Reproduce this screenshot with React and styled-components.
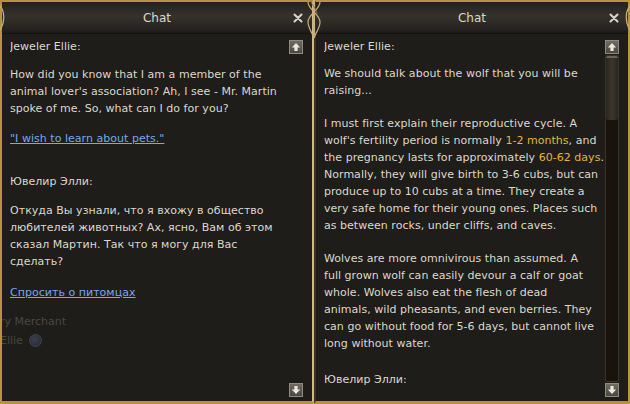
import React from 'react';
import styled, { createGlobalStyle } from 'styled-components';

const Global = createGlobalStyle`
  html, body {
    margin: 0;
    padding: 0;
    background: #1b1916;
  }
  body {
    width: 630px;
    height: 404px;
    overflow: hidden;
  }
`;

const gold = '#b8923f';

const Stage = styled.div`
  position: relative;
  display: flex;
  width: 630px;
  height: 404px;
  overflow: hidden;
  background: #1b1916;
  font-family: "DejaVu Sans", Verdana, sans-serif;
`;

const Window = styled.section`
  position: relative;
  display: flex;
  flex-direction: column;
  box-sizing: border-box;
  width: ${p => p.$w}px;
  height: 404px;
  border-top: 2px solid ${gold};
  border-bottom: 3px solid ${gold};
  border-left: 2px solid ${p => p.$leftEdge};
  border-right: 2px solid ${p => p.$rightEdge};
  background: #1f1d1a;
  overflow: hidden;
`;

const Header = styled.header`
  position: relative;
  flex: 0 0 31px;
  display: flex;
  align-items: center;
  justify-content: center;
  background: linear-gradient(#23211d 0%, #2b2924 20%, #35322c 45%, #2d2a25 70%, #242220 90%, #1c1a17 100%);
  border-bottom: 1px solid #15130f;
`;

const Title = styled.h1`
  margin: 0;
  font-size: 12px;
  font-weight: normal;
  color: #dcd8cc;
`;

const Close = styled.button`
  position: absolute;
  right: ${p => p.$right}px;
  top: 10px;
  width: 11px;
  height: 11px;
  padding: 0;
  border: 0;
  background: none;
  display: flex;
  align-items: center;
  justify-content: center;
`;

const Ornament = styled.svg`
  position: absolute;
  top: -2px;
  left: 50%;
  transform: translateX(-50%);
  pointer-events: none;
`;

const Body = styled.div`
  position: relative;
  flex: 1;
  display: flex;
  min-height: 0;
  padding: 4px 9px 4px 8px;
  background: #1f1d1a;
`;

const Content = styled.div`
  position: relative;
  z-index: 1;
  flex: 1;
  min-width: 0;
  overflow: hidden;
  font-size: 11px;
  letter-spacing: 0.03px;
  line-height: 17px;
  color: #dcd8cc;
`;

const Speaker = styled.div`
  margin-bottom: ${p => p.$gap}px;
`;

const Para = styled.p`
  margin: 0 0 ${p => p.$gap}px;
`;

const Hi = styled.span`
  color: #eab23a;
`;

const Link = styled.a`
  display: inline-block;
  margin-bottom: ${p => p.$gap}px;
  color: #7aa6ec;
  text-decoration: underline;
  cursor: pointer;
`;

const ScrollCol = styled.div`
  position: relative;
  z-index: 2;
  flex: 0 0 14px;
  display: flex;
  flex-direction: column;
  margin-left: ${p => p.$ml}px;
  padding-top: 2px;
`;

const ScrollBtn = styled.button`
  flex: 0 0 14px;
  width: 14px;
  height: 14px;
  padding: 0;
  box-sizing: border-box;
  border: 1px solid #8e8a7e;
  background: linear-gradient(#6f6b61, #4b4841);
  display: flex;
  align-items: center;
  justify-content: center;
`;

const Track = styled.div`
  flex: 1;
  margin: 1px 0 1px;
  display: flex;
  flex-direction: column;
  box-sizing: border-box;
  border: 1px solid #3a3127;
  border-radius: 2px;
  background: #1a120d;
  visibility: ${p => (p.$show ? 'visible' : 'hidden')};
`;

const Thumb = styled.div`
  height: 64px;
  box-sizing: border-box;
  border-radius: 2px;
  border-top: 2px solid #6b655a;
  background: linear-gradient(90deg, #2c2620, #3c352d 50%, #2c2620);
`;

const Backdrop = styled.div`
  position: absolute;
  left: ${p => p.$x}px;
  top: ${p => p.$y}px;
  z-index: 0;
  font-size: 11px;
  color: #4a4740;
  display: flex;
  align-items: center;
  gap: 6px;
  white-space: nowrap;
`;

const Dot = styled.span`
  width: 11px;
  height: 11px;
  border-radius: 50%;
  border: 1px solid #3f4450;
  background: radial-gradient(circle at 40% 40%, #3a4150, #22262e);
`;

const Twist = styled.svg`
  position: absolute;
  top: 0;
  left: ${p => p.$x}px;
  z-index: 3;
  pointer-events: none;
`;

const Arrow = ({ down }) => (
  <svg width="10" height="10" viewBox="0 0 10 10" style={down ? { transform: 'rotate(180deg)' } : undefined}>
    <path d="M5 1 L9.2 5.4 H6.6 V9 H3.4 V5.4 H0.8 Z" fill="#ece8dc" />
  </svg>
);

const CloseIcon = () => (
  <svg width="10" height="10" viewBox="0 0 10 10">
    <path d="M1.5 1.5 L8.5 8.5 M8.5 1.5 L1.5 8.5" stroke="#d8d4c8" strokeWidth="2" strokeLinecap="round" />
  </svg>
);

const TopOrnament = () => (
  <Ornament width="124" height="10" viewBox="0 0 124 10">
    <path d="M0 2 C16 2 24 9 40 9 C52 9 56 4 62 1 C68 4 72 9 84 9 C100 9 108 2 124 2" fill="none" stroke="#c9a860" strokeWidth="1.3" />
    <path d="M8 1 C20 1 28 6 40 6 C50 6 56 2 62 0 C68 2 74 6 84 6 C96 6 104 1 116 1" fill="none" stroke="#8a6e36" strokeWidth="1" />
  </Ornament>
);

const DividerTwist = () => (
  <Twist $x={305} width="18" height="38" viewBox="0 0 18 38">
    <path d="M9 0 V38" stroke="#c9b07a" strokeWidth="2" />
    <path d="M3 2 C3 10 15 14 15 22 C15 28 11 32 9 38" fill="none" stroke="#c9b07a" strokeWidth="1.2" />
    <path d="M15 2 C15 10 3 14 3 22 C3 28 7 32 9 38" fill="none" stroke="#c9b07a" strokeWidth="1.2" />
    <path d="M6 0 C6 6 12 8 12 14" fill="none" stroke="#8a7448" strokeWidth="1" />
  </Twist>
);

const EdgeCurl = ({ x, flip }) => (
  <Twist $x={x} width="6" height="36" viewBox="0 0 6 36" style={flip ? { transform: 'scaleX(-1)' } : undefined}>
    <path d="M0 6 C5 12 5 22 0 30" fill="none" stroke="#c9b07a" strokeWidth="1.2" />
  </Twist>
);

export default function App() {
  return (
    <>
      <Global />
      <Stage>
        <Window $w={314} $leftEdge={gold} $rightEdge="#cdb888">
          <TopOrnament />
          <Header>
            <Title>Chat</Title>
            <Close $right={9}><CloseIcon /></Close>
          </Header>
          <Body>
            <Backdrop $x={-2} $y={281}>ry Merchant</Backdrop>
            <Backdrop $x={-2} $y={300}>Ellie <Dot /></Backdrop>
            <Content>
              <Speaker $gap={11}>Jeweler Ellie:</Speaker>
              <Para $gap={13}>
                How did you know that I am a member of the animal lover's association? Ah, I see - Mr. Martin
                spoke of me. So, what can I do for you?
              </Para>
              <Link $gap={26}>"I wish to learn about pets."</Link>
              <Speaker $gap={12}>Ювелир Элли:</Speaker>
              <Para $gap={14}>
                Откуда Вы узнали, что я вхожу в общество любителей животных? Ах, ясно, Вам об этом сказал
                Мартин. Так что я могу для Вас<br />сделать?
              </Para>
              <Link $gap={0}>Спросить о питомцах</Link>
            </Content>
            <ScrollCol $ml={-11}>
              <ScrollBtn><Arrow /></ScrollBtn>
              <Track $show={false} />
              <ScrollBtn><Arrow down /></ScrollBtn>
            </ScrollCol>
          </Body>
        </Window>
        <Window $w={316} $leftEdge="#3a3228" $rightEdge={gold}>
          <TopOrnament />
          <Header>
            <Title>Chat</Title>
            <Close $right={9}><CloseIcon /></Close>
          </Header>
          <Body>
            <Content>
              <Speaker $gap={10}>Jeweler Ellie:</Speaker>
              <Para $gap={16}>We should talk about the wolf that you will be raising...</Para>
              <Para $gap={16}>
                I must first explain their reproductive cycle. A wolf's fertility period is normally{' '}
                <Hi>1-2 months</Hi>, and the pregnancy lasts for approximately <Hi>60-62 days</Hi>.
                Normally, they will give birth to 3-6 cubs, but can produce up to 10 cubs at a time. They
                create a very safe home for their young ones. Places such as between rocks, under cliffs, and
                caves.
              </Para>
              <Para $gap={19}>
                Wolves are more omnivirous than assumed. A<br />full grown wolf can easily devour a calf or goat
                whole. Wolves also eat the flesh of dead<br />animals, wild pheasants, and even berries. They can
                go without food for 5-6 days, but cannot live long without water.
              </Para>
              <Speaker $gap={10}>Ювелир Элли:</Speaker>
            </Content>
            <ScrollCol $ml={-2}>
              <ScrollBtn><Arrow /></ScrollBtn>
              <Track $show>
                <Thumb />
              </Track>
              <ScrollBtn><Arrow down /></ScrollBtn>
            </ScrollCol>
          </Body>
        </Window>
        <DividerTwist />
        <EdgeCurl x={0} />
        <EdgeCurl x={624} flip />
      </Stage>
    </>
  );
}
